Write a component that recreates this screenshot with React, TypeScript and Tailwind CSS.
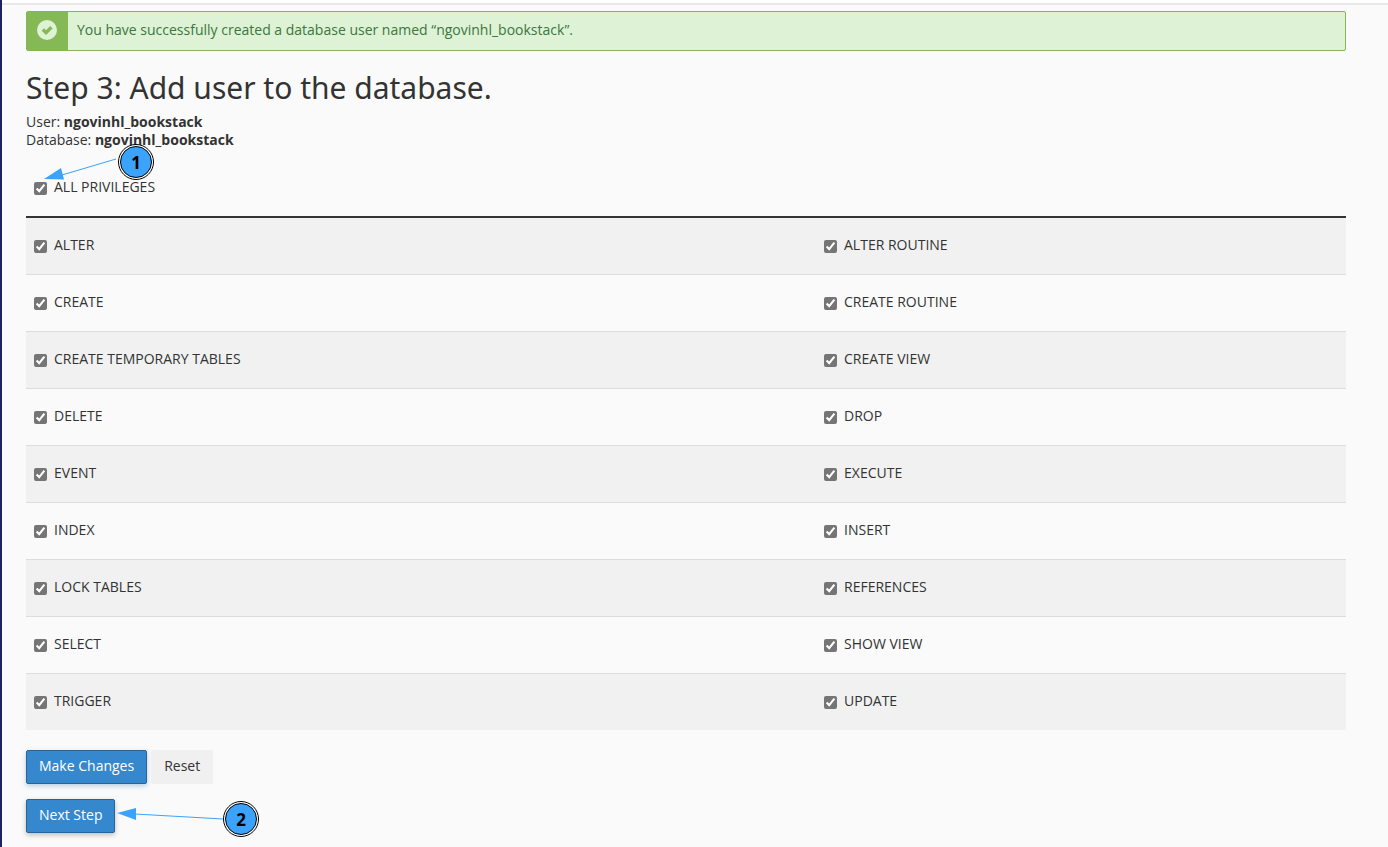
import { useState } from 'react';

const rows: [string, string][] = [
  ['ALTER', 'ALTER ROUTINE'],
  ['CREATE', 'CREATE ROUTINE'],
  ['CREATE TEMPORARY TABLES', 'CREATE VIEW'],
  ['DELETE', 'DROP'],
  ['EVENT', 'EXECUTE'],
  ['INDEX', 'INSERT'],
  ['LOCK TABLES', 'REFERENCES'],
  ['SELECT', 'SHOW VIEW'],
  ['TRIGGER', 'UPDATE'],
];

const everything = rows.flat();

function Privilege({ name, checked, onChange }: { name: string; checked: boolean; onChange: (on: boolean) => void }) {
  return (
    <label className="flex w-fit items-center gap-[7px]">
      <input
        type="checkbox"
        checked={checked}
        onChange={(e) => onChange(e.target.checked)}
        className="mt-1 size-[13px] accent-[#757575]"
      />
      {name}
    </label>
  );
}

function Marker({ n }: { n: number }) {
  return (
    <span className="flex size-9 items-center justify-center rounded-full border border-black bg-white p-px">
      <span className="flex size-full items-center justify-center rounded-full border border-black bg-[#3ba3fc] text-[17px] leading-none font-bold text-black">
        {n}
      </span>
    </span>
  );
}

export default function App() {
  const [granted, setGranted] = useState<string[]>(everything);
  const toggle = (name: string, on: boolean) =>
    setGranted((list) => (on ? [...list, name] : list.filter((item) => item !== name)));

  return (
    <div className="min-h-screen border-l-2 border-[#1d2260] bg-[#fafafa] font-['Open_Sans','Noto_Sans',sans-serif] text-sm leading-[18px] text-[#333]">
      <header className="h-[5px] border-b-2 border-[#e9e9e9] bg-white" />
      <main className="mt-[6px] mr-[42px] ml-6">
        <div role="status" className="flex h-10 overflow-hidden rounded-[2px] border border-[#84b657] bg-[#def2d6] text-[#3c763d]">
          <div className="flex w-[41px] items-center justify-center bg-[#84b955] pr-[2px] pb-[2px]">
            <svg viewBox="0 0 20 20" className="size-5" aria-hidden="true">
              <circle cx="10" cy="10" r="10" fill="#def2d6" />
              <path d="M5.8 9.6 L9 12.6 L14.4 7.2" fill="none" stroke="#84b955" strokeWidth="3.4" />
            </svg>
          </div>
          <p className="px-[9px] py-[9px]">You have successfully created a database user named “ngovinhl_bookstack”.</p>
        </div>

        <h1 className="mt-5 font-['Noto_Sans','Open_Sans',sans-serif] text-[30px] leading-[33px]">
          Step 3: Add user to the database.
        </h1>
        <p className="mt-[9px]">
          User: <b>ngovinhl_bookstack</b>
          <br />
          Database: <b>ngovinhl_bookstack</b>
        </p>

        <form onSubmit={(e) => e.preventDefault()} onReset={() => setGranted(everything)}>
          <div className="relative mt-[10px]">
            <table className="w-full table-fixed border-collapse">
              <colgroup>
                <col className="w-[59.85%]" />
                <col />
              </colgroup>
              <thead>
                <tr className="h-[58px] border-b-2 border-[#333]">
                  <th colSpan={2} className="px-2 pb-[2px] text-left font-normal">
                    <Privilege
                      name="ALL PRIVILEGES"
                      checked={granted.length === everything.length}
                      onChange={(on) => setGranted(on ? everything : [])}
                    />
                  </th>
                </tr>
              </thead>
              <tbody>
                {rows.map((pair) => (
                  <tr key={pair[0]} className="h-[57px] border-t border-[#ddd] odd:bg-[#f1f1f1]">
                    {pair.map((name) => (
                      <td key={name} className="px-2 pb-[2px]">
                        <Privilege name={name} checked={granted.includes(name)} onChange={(on) => toggle(name, on)} />
                      </td>
                    ))}
                  </tr>
                ))}
              </tbody>
            </table>
            <svg viewBox="0 0 100 24" className="pointer-events-none absolute -top-px left-[18px] h-6 w-[100px]" aria-hidden="true">
              <path d="M18 17 L72 1" stroke="#3ba3fc" />
              <path d="M0 21 L17 10 L20 21.5 Z" fill="#3ba3fc" />
            </svg>
            <div className="absolute -top-[15px] left-[92px]">
              <Marker n={1} />
            </div>
          </div>

          <div className="mt-5 flex gap-1">
            <button type="submit" className="h-[34px] rounded-[2px] border border-[#2a6496] bg-[#3688ce] px-3 pb-[2px] text-white shadow-[0_2px_5px_rgba(54,120,180,0.35)]">
              Make Changes
            </button>
            <button type="reset" className="h-[34px] rounded-[2px] border border-[#f0f0f0] bg-[#f0f0f0] px-3 pb-[2px]">
              Reset
            </button>
          </div>
          <div className="relative mt-[15px] mb-[14px] w-fit">
            <a href="#next" className="flex h-[34px] items-center rounded-[2px] border border-[#2a6496] bg-[#3688ce] px-3 pb-[2px] text-white shadow-[0_2px_5px_rgba(0,0,0,0.25)]">
              Next Step
            </a>
            <svg viewBox="0 0 110 20" className="pointer-events-none absolute top-[9px] left-[91px] h-5 w-[110px]" aria-hidden="true">
              <path d="M18 6 L106 11" stroke="#3ba3fc" />
              <path d="M0 5 L19 0 L19 12 Z" fill="#3ba3fc" />
            </svg>
            <div className="absolute top-[2px] left-[197px]">
              <Marker n={2} />
            </div>
          </div>
        </form>
      </main>
    </div>
  );
}
